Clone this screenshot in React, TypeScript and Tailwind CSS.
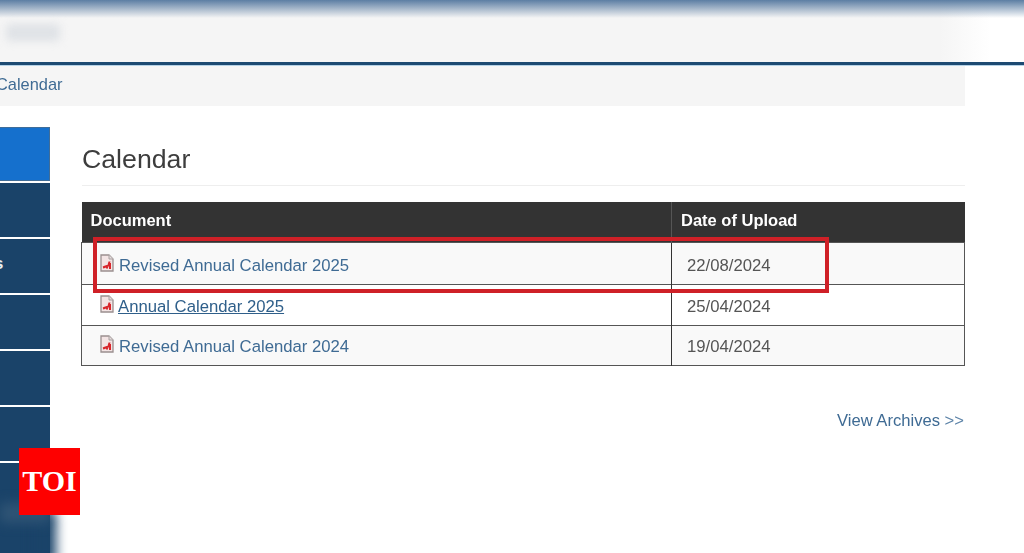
const sans = "font-['Liberation_Sans',Arial,sans-serif]";

function PdfIcon() {
  return (
    <svg width="14" height="18" viewBox="0 0 14 18" className="shrink-0">
      <path d="M1 1h8l4 4v12H1z" fill="#f3e4e4" stroke="#9a8f8f" strokeWidth="1.300" />
      <path d="M9 1v4h4" fill="#e4dcdc" stroke="#a8a0a0" strokeWidth="1" />
      <path d="M3 13.500c2-.6 5-2.200 7.500-2.600M9.500 7.500c-.3 2.400-1.500 5-3 7M10 9v6" fill="none" stroke="#d8262c" strokeWidth="2" />
    </svg>
  );
}

const rows = [
  { name: "Revised Annual Calendar 2025", date: "22/08/2024", bg: "bg-[#f9f9f9]", link: "text-[#3f6b94] ml-[5px]", h: "h-[42px]", pad: "pt-[5px]" },
  { name: "Annual Calendar 2025", date: "25/04/2024", bg: "bg-white", link: "text-[#2f5f8a] underline ml-[4px]", h: "h-[41px]", pad: "pt-[4px]" },
  { name: "Revised Annual Calendar 2024", date: "19/04/2024", bg: "bg-[#f9f9f9]", link: "text-[#3f6b94] ml-[5px]", h: "h-[40px]", pad: "pt-[3px]" },
];

export default function App() {
  return (
    <div className={`relative h-[553px] w-[1024px] overflow-hidden bg-white ${sans}`}>
      <div className="relative h-[62px] bg-[linear-gradient(to_right,#f5f5f5_940px,#ffffff_990px)]">
        <div className="h-[18px] bg-gradient-to-b from-[#5c7ea3] to-transparent" />
        <div className="absolute left-[6px] top-[24px] h-[17px] w-[54px] rounded bg-[#dfe2e6] blur-[4px]" />
      </div>
      <div className="h-[3px] bg-[#1d4a72]" />
      <div className="h-px bg-[#b5d2e6]" />

      <div className="flex h-[40px] w-[965px] items-center bg-[#f5f5f5] pb-[3px]">
        <span className="ml-[-4px] text-[16.4px] text-[#3f6b94] blur-[0.3px]">Calendar</span>
      </div>

      <div className="flex">
        <nav className="mt-[21px] flex h-[426px] w-[50px] flex-col gap-[2px]">
          <div className="h-[54px] border border-l-0 border-[#3f6d99] bg-[#1570cd]" />
          <div className="h-[54px] bg-[#1a4369]" />
          <div className="flex h-[54px] items-center bg-[#1a4369] pb-[4px]">
            <span className="ml-[-6px] text-[16.8px] font-bold text-[#e8edf2]">s</span>
          </div>
          <div className="h-[54px] bg-[#1a4369]" />
          <div className="h-[54px] bg-[#1a4369]" />
          <div className="h-[54px] bg-[#1a4369]" />
          <div className="h-[90px] shrink-0 bg-[#1a4369]" />
        </nav>

        <main className="ml-[32px] w-[883px]">
          <h1 className="mt-[37px] border-b border-[#eeeeee] pb-[9px] text-[26.7px] leading-[33px] font-normal text-[#3d3d3d] blur-[0.3px]">
            Calendar
          </h1>

          <table className="ml-[-1px] mt-[16px] w-[884px] table-fixed border-collapse text-[16.7px] blur-[0.25px]">
            <thead>
              <tr className="h-[40px] bg-[#333333] text-left font-bold text-white">
                <th className="w-[590px] border-r border-[#555555] pb-[2px] pl-[9px] text-[16.5px] font-bold">Document</th>
                <th className="pb-[2px] pl-[9px] text-[16.5px] font-bold">Date of Upload</th>
              </tr>
            </thead>
            <tbody>
              {rows.map((row) => (
                <tr key={row.date} className={`${row.bg} ${row.h} border border-[#555555]`}>
                  <td className={`border-r border-[#333333] pl-[18px] ${row.pad}`}>
                    <div className="flex items-center">
                      <span className="mb-[5px]">
                        <PdfIcon />
                      </span>
                      <a className={row.link}>{row.name}</a>
                    </div>
                  </td>
                  <td className={`pl-[15px] text-[#555555] ${row.pad}`}>{row.date}</td>
                </tr>
              ))}
            </tbody>
          </table>

          <div className="mt-[43px] pr-px text-right text-[16.6px] text-[#3f6b94] blur-[0.25px]">
            View Archives <span className="text-[#5c83a8]">&gt;&gt;</span>
          </div>
        </main>
      </div>

      {/* Highlight drawn over the first row */}
      <div className="absolute left-[93px] top-[237px] h-[56px] w-[736px] border-[4px] border-[#cf2027]" />

      {/* Blurred edge of the cropped image */}
      <div className="absolute bottom-[-10px] left-[34px] h-[50px] w-[22px] bg-[#1a4369] blur-[6px]" />
      <div className="absolute bottom-[30px] left-0 h-[20px] w-[50px] bg-[#2f5475] blur-[6px]" />

      {/* TOI badge */}
      <div className="absolute left-[19px] top-[448px] flex h-[67px] w-[61px] items-center justify-center bg-[#fe0000] pb-[2px]">
        <span className="font-['Liberation_Serif',serif] text-[30px] font-bold leading-none text-white">TOI</span>
      </div>
    </div>
  );
}
